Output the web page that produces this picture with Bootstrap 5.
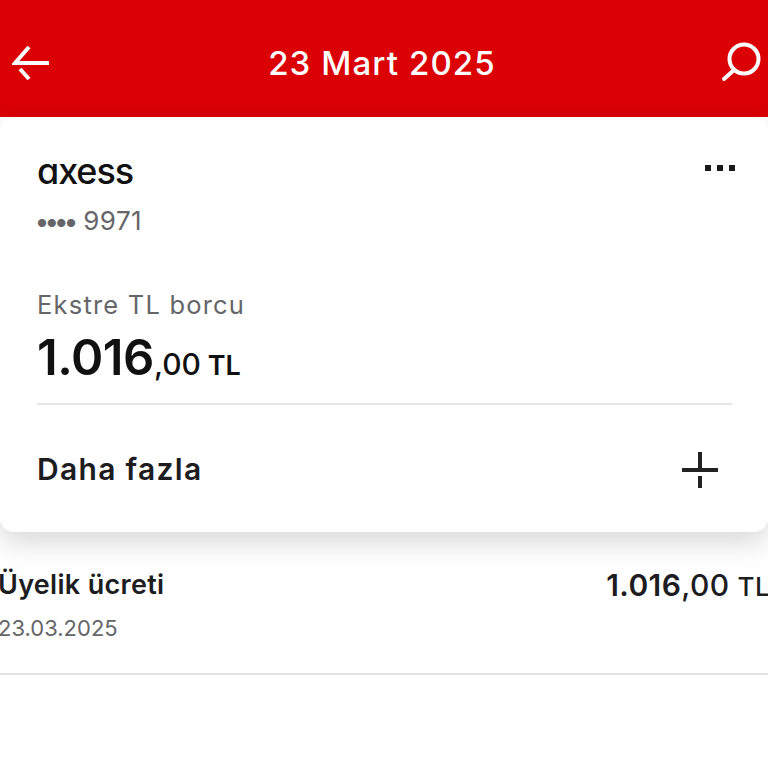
<!DOCTYPE html>
<html lang="en">
<head>
  <meta charset="UTF-8" />
  <meta name="viewport" content="width=device-width, initial-scale=1.0"/>
  <title>Ekstre</title>
  <link href="https://cdn.jsdelivr.net/npm/bootstrap@5.3.3/dist/css/bootstrap.min.css" rel="stylesheet" />
  <style>
    body {
      background: #fff;
      font-family: "Inter", "Noto Sans", sans-serif;
      color: #1d1d1f;
      overflow: hidden;
    }
    .top-bar {
      background-color: #da0004;
      height: 117px;
      padding: 42px 5px 0 12px;
      color: #fff;
      align-items: flex-start;
    }
    .top-title {
      font-size: 33px;
      font-weight: 500;
      line-height: 42px;
      letter-spacing: 1.1px;
      margin-left: -9px;
    }
    .debt-card {
      background: #fff;
      border-radius: 14px;
      height: 415px;
      padding: 34px 36px 0 37px;
      box-shadow: 0 10px 28px rgba(0,0,0,.16);
    }
    .brand-logo {
      font-size: 36px;
      line-height: 40px;
      font-weight: 500;
      letter-spacing: -1.1px;
      color: #111;
      font-feature-settings: "cv11";
    }
    .dots-menu { margin: 14px -3px 0 0; }
    .card-no {
      color: #666668;
      font-size: 26px;
      line-height: 34px;
      margin-top: 13px;
      letter-spacing: .4px;
    }
    .card-no .mask-dots { font-size: 11px; letter-spacing: -.4px; vertical-align: 3px; }
    .debt-label {
      color: #666668;
      font-size: 25.5px;
      line-height: 34px;
      margin-top: 48px;
      letter-spacing: 1.2px;
    }
    .debt-amount {
      color: #111;
      font-weight: 600;
      line-height: 56px;
      margin-top: 8px;
      padding-bottom: 9px;
      border-bottom: 2px solid #e6e6e6;
      font-size: 27px;
    }
    .debt-amount .whole { font-size: 49px; letter-spacing: -.5px; }
    .debt-amount .cents { font-size: 30px; font-weight: 500; }
    .more-row {
      height: 129px;
      padding-right: 14px;
      font-size: 30px;
      font-weight: 600;
      letter-spacing: 1.3px;
    }
    .tx-row {
      margin: 0 -2px;
      padding: 33px 0 30px;
      border-bottom: 2px solid #e3e3e3;
    }
    .tx-name { font-size: 27px; font-weight: 600; line-height: 40px; letter-spacing: .3px; }
    .tx-date { font-size: 22px; line-height: 30px; color: #666668; margin-top: 8px; }
    .tx-amount { font-size: 30px; font-weight: 600; line-height: 40px; letter-spacing: .4px; }
    .tx-amount .cents { font-weight: 500; }
    .tx-amount .unit { font-size: 26px; font-weight: 500; }
  </style>
</head>
<body>
  <!-- Header -->
  <div class="top-bar d-flex justify-content-between">
    <svg width="40" height="40" viewBox="0 0 40 40" fill="none" stroke="#fff" stroke-width="4">
      <path d="M17 5 L3 21 H37"/>
      <path d="M8 27 L17 37"/>
    </svg>
    <div class="top-title">23 Mart 2025</div>
    <svg width="42" height="42" viewBox="0 0 42 42" fill="none" stroke="#fff" stroke-width="4">
      <circle cx="23" cy="17" r="14.5"/>
      <path d="M13 28 L3 37" stroke-linecap="round"/>
    </svg>
  </div>

  <!-- Card -->
  <div class="debt-card">
    <div class="d-flex justify-content-between align-items-start">
      <div class="brand-logo">axess</div>
      <svg width="30" height="6" viewBox="0 0 30 6" fill="#1a1a1a" class="dots-menu">
        <rect x="0" width="6" height="6"/>
        <rect x="12" width="6" height="6"/>
        <rect x="24" width="6" height="6"/>
      </svg>
    </div>
    <div class="card-no"><span class="mask-dots">●●●●</span> 9971</div>
    <div class="debt-label">Ekstre TL borcu</div>
    <div class="debt-amount"><span class="whole">1.016</span><span class="cents">,00</span> TL</div>
    <div class="more-row d-flex justify-content-between align-items-center">
      <span>Daha fazla</span>
      <svg width="36" height="36" viewBox="0 0 36 36" fill="none" stroke="#222" stroke-width="4">
        <path d="M0 18 H36"/>
        <path d="M18 0 V16"/>
        <path d="M18 24 V36"/>
      </svg>
    </div>
  </div>

  <!-- Transactions -->
  <div class="tx-row d-flex justify-content-between">
    <div>
      <div class="tx-name">Üyelik ücreti</div>
      <div class="tx-date">23.03.2025</div>
    </div>
    <div class="tx-amount">1.016<span class="cents">,00</span> <span class="unit">TL</span></div>
  </div>

  <script src="https://cdn.jsdelivr.net/npm/bootstrap@5.3.3/dist/js/bootstrap.bundle.min.js"></script>
</body>
</html>
